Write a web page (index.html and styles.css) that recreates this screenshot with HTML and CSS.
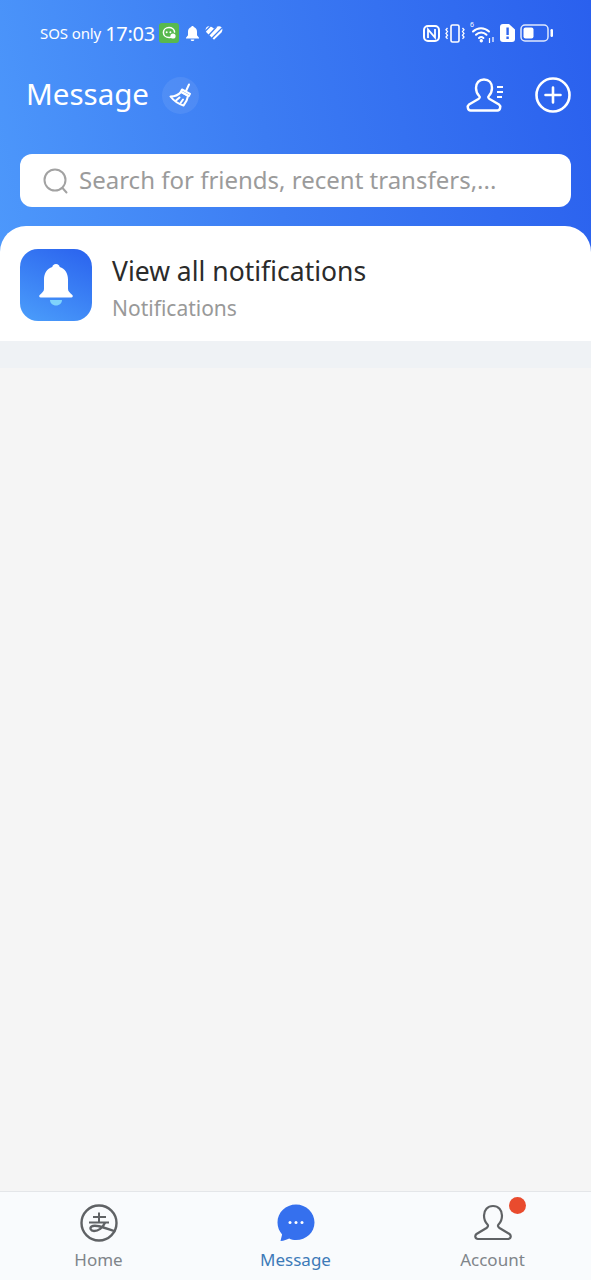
FILE: index.html
```html
<!DOCTYPE html>
<html lang="en">
<head>
  <meta charset="UTF-8" />
  <meta name="viewport" content="width=device-width, initial-scale=1.0" />
  <title>Message</title>
  <link rel="stylesheet" href="styles.css">
</head>
<body>
  <div class="top">
    <!-- Status bar -->
    <div class="status-bar">
      <div class="status-left">
        <span class="sos">SOS only</span>
        <span class="time">17:03</span>
        <svg class="app-badge" width="20" height="20" viewBox="0 0 20 20">
          <rect width="20" height="20" rx="3" fill="#58b94e"/>
          <path d="M11.700 14.300c-.5.100-1.100.2-1.700.2-3.200 0-5.600-2.200-5.600-5s2.400-5 5.600-5c3 0 5.400 2 5.600 4.600" fill="none" stroke="#fff" stroke-width="1.500" stroke-linecap="round"/>
          <circle cx="7.700" cy="9.200" r="1" fill="#fff"/>
          <circle cx="11.400" cy="9.200" r="1" fill="#fff"/>
          <circle cx="14" cy="13" r="2.600" fill="#fff"/>
        </svg>
        <svg class="status-bell" width="15" height="17" viewBox="0 0 15 16">
          <path d="M7.500 0.500c.8 0 1.200.5 1.300 1.100 2 .6 3.200 2.300 3.200 4.600v3.600l2 2.400v.8H1v-.8l2-2.400V6.200c0-2.300 1.200-4 3.200-4.600.1-.6.500-1.100 1.300-1.100z" fill="#fff"/>
          <path d="M5.700 13.900h3.600c0 1-.8 1.700-1.800 1.700s-1.800-.7-1.800-1.700z" fill="#fff"/>
        </svg>
        <svg class="heart" width="18" height="14" viewBox="0 0 18 14">
          <path d="M9 13.800L1.500 6.500C-.5 3.800 1 .3 4 .3 6 .3 7.500 1.300 9 2.800 10.500 1.300 12 .3 14 .3 17 .3 18.500 3.800 16.500 6.500z" fill="#fff"/>
          <path d="M0 5.500L5.500 0M3.500 9.500L11.500 1M7 12L17 2" stroke="#3f80f4" stroke-width="1.300" fill="none"/>
        </svg>
      </div>
      <div class="status-right">
        <svg width="17" height="17" viewBox="0 0 17 17">
          <rect x="1" y="1" width="15" height="15" rx="4" fill="none" stroke="#fff" stroke-width="2"/>
          <path d="M5 13V4.500l7 8V4" fill="none" stroke="#fff" stroke-width="1.800"/>
        </svg>
        <svg width="20" height="19" viewBox="0 0 20 19">
          <rect x="6" y="1" width="8" height="17" rx="1.500" fill="none" stroke="#fff" stroke-width="1.600"/>
          <path d="M2.500 4l-1.500 1.800 1.500 1.800-1.500 1.800 1.500 1.800-1.500 1.800 1.500 1.800M17.500 4l1.500 1.800-1.500 1.800 1.500 1.800-1.500 1.800 1.500 1.800-1.500 1.800" fill="none" stroke="#fff" stroke-width="1.300"/>
        </svg>
        <span class="wifi">
          <svg width="25" height="20" viewBox="0 0 25 20">
            <path d="M3 8.500c4.600-4.500 11.400-4.500 16 0M6 11.800c3-3 7.500-3 10.500 0M9 15c1.400-1.300 3-1.300 4.400 0" fill="none" stroke="#fff" stroke-width="2" stroke-linecap="round"/>
            <circle cx="11.300" cy="17.800" r="1.700" fill="#fff"/>
            <path d="M19.500 15v5M23 14v5" stroke="#fff" stroke-width="1.200"/>
          </svg>
          <span class="wifi-six">6</span>
        </span>
        <svg width="15" height="18" viewBox="0 0 15 18">
          <path d="M3 0h6l6 5.500V15a3 3 0 0 1-3 3H3a3 3 0 0 1-3-3V3a3 3 0 0 1 3-3z" fill="#fff"/>
          <rect x="6.400" y="3.500" width="2.400" height="7.500" fill="#2f66ee"/>
          <rect x="6.400" y="12.500" width="2.400" height="2.500" fill="#2f66ee"/>
        </svg>
        <svg width="33" height="18" viewBox="0 0 33 18">
          <rect x="1" y="1" width="27" height="16" rx="4" fill="none" stroke="#fff" stroke-opacity=".85" stroke-width="1.500"/>
          <rect x="3.500" y="3.500" width="10" height="11" rx="2" fill="#fff"/>
          <rect x="30.500" y="5" width="2.500" height="8" rx="1.200" fill="#fff"/>
        </svg>
      </div>
    </div>

    <div class="title-row">
      <div class="title-left">
        <h1>Message</h1>
        <span class="clean-btn">
          <svg width="26" height="26" viewBox="0 0 26 26">
            <g fill="none" stroke="#fff" stroke-width="2" stroke-linejoin="round" stroke-linecap="round">
              <path d="M21 2.500l-3 6.500"/>
              <path d="M14 7.500l8 4.300-1.200 2.200-8-4.300z"/>
              <path d="M13 10l7 4c-.5 3.500-2 6.500-4.500 9.500C10.500 22 6 19 2.500 14.500 7 14.500 10.500 13 13 10z"/>
              <path d="M8 18.500l3.500-3M12.500 21l2.500-3.500"/>
            </g>
          </svg>
        </span>
      </div>
      <div class="title-right">
        <svg width="38" height="34" viewBox="0 0 38 34">
          <path d="M18 1.500C13 1.500 10 5 10 10c0 3.500 1.300 6 3.200 8 1 1 .6 2-.8 3L3 26.500C1 28 1.500 32.500 4.500 32.500h27c3 0 3.500-4.500 1.500-6L23.600 21c-1.400-1-1.800-2-.8-3 1.900-2 3.200-4.500 3.200-8 0-5-3-8.500-8-8.500z" fill="none" stroke="#fff" stroke-width="2.400" stroke-linejoin="round"/>
          <path d="M31 9h6M31 14h6M31 19h5" stroke="#fff" stroke-width="2.200"/>
        </svg>
        <svg width="36" height="36" viewBox="0 0 36 36">
          <circle cx="18" cy="18" r="16.500" fill="none" stroke="#fff" stroke-width="2.600"/>
          <path d="M18 10.500v15M10.500 18h15" stroke="#fff" stroke-width="2.600" stroke-linecap="round"/>
        </svg>
      </div>
    </div>

    <div class="search-box">
      <svg width="26" height="26" viewBox="0 0 26 26">
        <circle cx="12" cy="12" r="10.500" fill="none" stroke="#a2a2a2" stroke-width="2"/>
        <path d="M19.500 20l4 4.500" stroke="#a2a2a2" stroke-width="2" stroke-linecap="round"/>
      </svg>
      <span>Search for friends, recent transfers,...</span>
    </div>

    <div class="notice-card">
      <div class="notice-icon">
        <svg width="36" height="42" viewBox="0 0 36 42">
          <path d="M18 0c2.200 0 3.500 1.400 3.700 3 5.300 1.800 8.300 6.300 8.300 12.500v9.500c0 2.300 2 4 4.300 6 1 .9.500 2.500-1 2.500H2.700c-1.500 0-2-1.600-1-2.500 2.300-2 4.300-3.700 4.300-6v-9.500C6 9.300 9 4.800 14.300 3c.2-1.600 1.500-3 3.700-3z" fill="#fff"/>
          <path d="M12 36h12c0 3-2.500 5.500-6 5.500s-6-2.500-6-5.500z" fill="#7fd3fb"/>
        </svg>
      </div>
      <div class="notice-text">
        <div class="notice-title">View all notifications</div>
        <div class="notice-sub">Notifications</div>
      </div>
    </div>
  </div>

  <div class="strip"></div>
  <main class="list-empty"></main>

  <nav class="tabs">
    <a class="tab">
      <svg width="38" height="38" viewBox="0 0 38 38">
        <circle cx="19" cy="19" r="17.500" fill="none" stroke="#5f6265" stroke-width="2.400"/>
        <path d="M13 13h13M19 8.500V18M9 18.500h20" fill="none" stroke="#5f6265" stroke-width="2"/>
        <path d="M25 18.500c-2 5.500-7 8.500-11 8.500-3.500 0-4.500-3-2.500-4.500 3-2 9-.5 24 5" fill="none" stroke="#5f6265" stroke-width="2.300"/>
      </svg>
      <span>Home</span>
    </a>
    <a class="tab active">
      <svg width="38" height="38" viewBox="0 0 38 38">
        <path d="M19 .5C8.800.5.500 8.400.500 18.500c0 4.600 1.700 8.700 4.600 11.900L3.500 37c3.500-.5 6.500-1.400 8.700-2.600C14.300 35.300 16.600 36 19 36c10.200 0 18.500-7.600 18.500-17.500S29.200.5 19 .5z" fill="#3570ee"/>
        <circle cx="13" cy="18.500" r="1.500" fill="#fff"/>
        <circle cx="19" cy="18.500" r="1.500" fill="#fff"/>
        <circle cx="25" cy="18.500" r="1.500" fill="#fff"/>
      </svg>
      <span>Message</span>
    </a>
    <a class="tab">
      <span class="tab-icon">
        <svg width="38" height="38" viewBox="0 0 38 38">
          <path d="M19 2c-5.500 0-9 4-9 9.500 0 4 1.500 7 3.500 9 1 1 .5 2.500-1 3.500l-10 6c-2 1.500-1.500 5 1.500 5h30c3 0 3.500-3.500 1.500-5l-10-6c-1.500-1-2-2.500-1-3.500 2-2 3.500-5 3.500-9C28 6 24.500 2 19 2z" fill="none" stroke="#5f6265" stroke-width="2.200" stroke-linejoin="round"/>
        </svg>
        <i class="red-dot"></i>
      </span>
      <span>Account</span>
    </a>
  </nav>
</body>
</html>
```

FILE: styles.css
```css
* { box-sizing: border-box; }
html, body { height: 100%; }
body { margin: 0; height: 1280px; display: flex; flex-direction: column; font-family: "Noto Sans", sans-serif; background-color: #f5f5f5; color: #2b2b2b; overflow: hidden; }
svg { display: block; flex: none; }

/* Blue header */
.top { background: linear-gradient(78deg, #4d98fb 0%, #3c7cf3 45%, #2a60ee 100%); background-size: 100% 252px; background-repeat: no-repeat; background-color: #fff; }
.status-bar { height: 66px; padding: 0 38px 0 40px; display: flex; justify-content: space-between; align-items: center; color: #fff; }
.status-left { display: flex; align-items: center; gap: 4px; }
.status-right { display: flex; align-items: center; gap: 5px; }
.sos { font-size: 15px; letter-spacing: -0.1px; }
.time { font-size: 20px; letter-spacing: -0.3px; }
.status-bell { margin-left: 2px; margin-right: -1px; }
.heart { margin-left: 2px; }
.wifi { position: relative; display: block; }
.wifi-six { position: absolute; top: -3px; left: 0; font-size: 7px; line-height: 10px; color: #fff; }
.title-row { height: 58px; padding: 0 20px 0 26px; display: flex; justify-content: space-between; align-items: center; }
.title-left { display: flex; align-items: center; gap: 13px; }
.title-left h1 { margin: 0; font-size: 29.5px; line-height: 40px; margin-top: -2px; font-weight: 400; color: #fff; }
.clean-btn { width: 37px; height: 37px; border-radius: 50%; background: rgba(255,255,255,0.08); display: flex; align-items: center; justify-content: center; }
.title-right { display: flex; align-items: center; gap: 31px; }
.search-box { margin: 30px 20px 19px; height: 53px; background: #fff; border-radius: 12px; display: flex; align-items: center; gap: 10px; padding-left: 23px; font-size: 24px; color: #9b9b9b; white-space: nowrap; }
.search-box span { margin-top: -2px; }

/* Notification row */
.notice-card { height: 115px; background: #fff; border-radius: 26px 26px 0 0; padding: 23px 20px 20px; display: flex; gap: 20px; }
.notice-icon { width: 72px; height: 72px; border-radius: 18px; background: linear-gradient(205deg, #2a62ee 0%, #4b9efb 100%); display: flex; align-items: center; justify-content: center; }
.notice-title { font-size: 26.5px; line-height: 36px; margin-top: 4px; }
.notice-sub { font-size: 21px; line-height: 30px; color: #999; margin-top: 4px; }

.strip { height: 27px; background: #eff2f5; }
.list-empty { flex: 1; background: #f5f5f5; }

/* Bottom tabs */
.tabs { height: 89px; flex: none; background: #f9fbfd; border-top: 1px solid #e4e6e9; display: grid; grid-template-columns: repeat(3, 197px); }
.tab { display: flex; flex-direction: column; align-items: center; padding-top: 12px; font-size: 17px; color: #80858a; gap: 6px; }
.tab.active { color: #3d7ab8; }
.tab-icon { position: relative; display: block; }
.red-dot { position: absolute; top: -7px; right: -14px; width: 17px; height: 17px; border-radius: 50%; background: #e94b2e; }
```
